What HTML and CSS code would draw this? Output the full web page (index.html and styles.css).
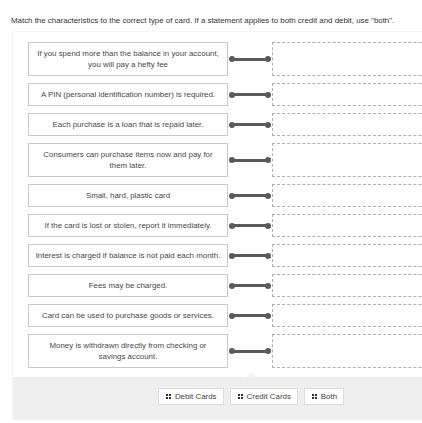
FILE: index.html
```html
<!DOCTYPE html>
<html>
<head>
<meta charset="utf-8">
<link rel="stylesheet" href="styles.css">
</head>
<body>
<p class="prompt">Match the characteristics to the correct type of card. If a statement applies to both credit and debit, use "both".</p>
<div class="board">
  <div class="rows">
    <div class="row"><div class="card">If you spend more than the balance in your account, you will pay a hefty fee</div><div class="link"><span class="dot"></span><span class="bar"></span><span class="dot"></span></div><div class="zone"></div></div>
    <div class="row"><div class="card">A PIN (personal identification number) is required.</div><div class="link"><span class="dot"></span><span class="bar"></span><span class="dot"></span></div><div class="zone"></div></div>
    <div class="row"><div class="card">Each purchase is a loan that is repaid later.</div><div class="link"><span class="dot"></span><span class="bar"></span><span class="dot"></span></div><div class="zone"></div></div>
    <div class="row"><div class="card">Consumers can purchase items now and pay for them later.</div><div class="link"><span class="dot"></span><span class="bar"></span><span class="dot"></span></div><div class="zone"></div></div>
    <div class="row"><div class="card">Small, hard, plastic card</div><div class="link"><span class="dot"></span><span class="bar"></span><span class="dot"></span></div><div class="zone"></div></div>
    <div class="row"><div class="card">If the card is lost or stolen, report it immediately.</div><div class="link"><span class="dot"></span><span class="bar"></span><span class="dot"></span></div><div class="zone"></div></div>
    <div class="row"><div class="card tight">Interest is charged if balance is not paid each month.</div><div class="link"><span class="dot"></span><span class="bar"></span><span class="dot"></span></div><div class="zone"></div></div>
    <div class="row"><div class="card">Fees may be charged.</div><div class="link"><span class="dot"></span><span class="bar"></span><span class="dot"></span></div><div class="zone"></div></div>
    <div class="row"><div class="card">Card can be used to purchase goods or services.</div><div class="link"><span class="dot"></span><span class="bar"></span><span class="dot"></span></div><div class="zone"></div></div>
    <div class="row"><div class="card wide">Money is withdrawn directly from checking or savings account.</div><div class="link"><span class="dot"></span><span class="bar"></span><span class="dot"></span></div><div class="zone"></div></div>
  </div>
  <div class="tray">
    <span class="notch"></span>
    <div class="chip"><svg class="grip" width="5" height="5" viewBox="0 0 5 5"><rect x="0" y="0" width="2" height="2"/><rect x="3" y="0" width="2" height="2"/><rect x="0" y="3" width="2" height="2"/><rect x="3" y="3" width="2" height="2"/></svg>Debit Cards</div>
    <div class="chip"><svg class="grip" width="5" height="5" viewBox="0 0 5 5"><rect x="0" y="0" width="2" height="2"/><rect x="3" y="0" width="2" height="2"/><rect x="0" y="3" width="2" height="2"/><rect x="3" y="3" width="2" height="2"/></svg>Credit Cards</div>
    <div class="chip"><svg class="grip" width="5" height="5" viewBox="0 0 5 5"><rect x="0" y="0" width="2" height="2"/><rect x="3" y="0" width="2" height="2"/><rect x="0" y="3" width="2" height="2"/><rect x="3" y="3" width="2" height="2"/></svg>Both</div>
  </div>
</div>
</body>
</html>
```
FILE: styles.css
```css
html, body {
  margin: 0;
  padding: 0;
  background: #fff;
  overflow: hidden;
}
body {
  font-family: "Liberation Sans", Arial, sans-serif;
  color: #444;
  width: 422px;
  height: 423px;
}
.prompt {
  margin: 0;
  padding: 15px 0 0 11px;
  font-size: 7.9px;
  line-height: 11px;
  color: #333;
  white-space: nowrap;
}
.board {
  margin: 5px 0 0 12px;
  width: 476px;
  border-left: 1px solid #f4f4f4;
  border-top: 1px solid #f7f7f7;
}
.rows {
  display: flex;
  flex-direction: column;
  gap: 7px;
  padding: 10px 0 9px 15px;
}
.row {
  display: flex;
  align-items: stretch;
}
.card {
  width: 200px;
  box-sizing: border-box;
  border: 1px solid #c9c9c9;
  padding: 5px 8px;
  font-size: 7.9px;
  line-height: 11px;
  text-align: center;
  color: #484848;
  background: #fff;
}
.card.tight {
  padding: 5px 2px;
}
.card.wide {
  padding: 5px 20px;
}
.link {
  width: 44px;
  display: flex;
  align-items: center;
  padding: 0 1px;
  box-sizing: border-box;
}
.dot {
  width: 6px;
  height: 6px;
  border-radius: 50%;
  background: #5a5a5a;
  flex: none;
}
.bar {
  flex: 1;
  height: 3px;
  background: #5a5a5a;
  margin: 0 -1px;
}
.zone {
  width: 200px;
  box-sizing: border-box;
  border: 1px dashed #b0b0b0;
  border-right: none;
}
.tray {
  position: relative;
  background: #efefef;
  height: 43px;
  display: flex;
  justify-content: center;
  align-items: flex-start;
  gap: 6px;
  padding-top: 11px;
  box-sizing: border-box;
}
.notch {
  position: absolute;
  top: -5px;
  left: 232px;
  width: 0;
  height: 0;
  border-left: 6px solid transparent;
  border-right: 6px solid transparent;
  border-bottom: 5px solid #f5f5f5;
}
.chip {
  display: flex;
  align-items: center;
  gap: 4px;
  height: 17px;
  box-sizing: border-box;
  padding: 0 6px 0 7px;
  background: #fff;
  border: 1px solid #dcdcdc;
  font-size: 7.9px;
  color: #444;
}
.grip {
  fill: #333;
  flex: none;
}
```
